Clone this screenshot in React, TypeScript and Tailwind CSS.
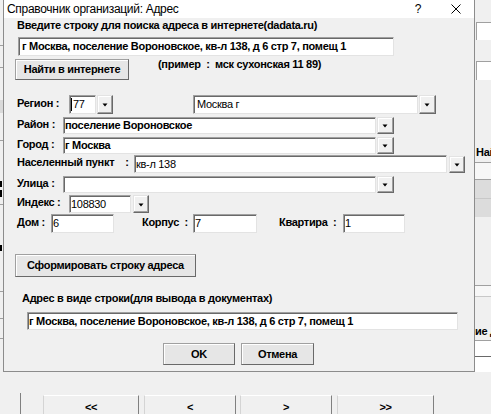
import React from 'react';

// sunken text box, classic WinForms look
const Field = ({ className = '', value = '', bold = false, cursor = false }: {
  className?: string;
  value?: string;
  bold?: boolean;
  cursor?: boolean;
}) => (
  <div
    className={`flex items-center shrink-0 bg-white border border-t-[#a0a0a0] border-l-[#a0a0a0] border-r-[#e3e3e3] border-b-[#e3e3e3] shadow-[inset_1px_1px_0_#696969] overflow-hidden whitespace-pre text-[11px] leading-[13px] ${bold ? 'font-bold' : 'font-normal'} ${className}`}
  >
    {cursor && <span className="w-px h-[13px] bg-black mr-px" />}
    {value}
  </div>
);

const DropBtn = ({ className = '' }: { className?: string }) => (
  <div
    className={`flex items-center justify-center shrink-0 bg-[#f0f0f0] border border-t-[#e3e3e3] border-l-[#e3e3e3] border-r-[#696969] border-b-[#696969] shadow-[inset_-1px_-1px_0_#a0a0a0,inset_1px_1px_0_#ffffff] ${className}`}
  >
    <svg width="7" height="4" viewBox="0 0 7 4" className="mt-px">
      <path d="M0.5 0.5h5l-2.5 3z" fill="#000" />
    </svg>
  </div>
);

const Btn = ({ className = '', children }: { className?: string; children: React.ReactNode }) => (
  <div
    className={`flex items-center justify-center shrink-0 bg-[#e6e6e6] border border-[#a0a0a0] border-r-[#696969] border-b-[#696969] shadow-[inset_1px_1px_0_#ffffff] text-[11px] font-bold leading-[13px] ${className}`}
  >
    {children}
  </div>
);

// row labels sit a touch above the middle of their text box
const Label = ({ className = '', children }: { className?: string; children: React.ReactNode }) => (
  <div className={`shrink-0 whitespace-pre text-[11px] leading-[13px] font-bold ${className}`}>{children}</div>
);

const NavBtn = ({ className = '', children }: { className?: string; children: React.ReactNode }) => (
  <div
    className={`flex justify-center pt-[5px] h-[26px] shrink-0 bg-[#f0f0f0] border border-t-[#ffffff] border-l-[#d4d4d4] border-r-[#808080] border-b-[#808080] text-[11px] font-bold leading-[13px] ${className}`}
  >
    {children}
  </div>
);

const Dialog = () => (
  <div className="absolute left-[3px] top-0 w-[472px] h-[372px] flex flex-col bg-[#f0f0f0] border-l border-r border-b border-[#8c8c8c]">
    <div className="h-[18px] shrink-0 flex items-center bg-white text-[12px] leading-[14px]">
      <span className="pl-[3px]">Справочник организаций: Адрес</span>
      <span className="ml-auto w-[40px] text-center">?</span>
      <span className="w-[36px] flex justify-center">
        <svg width="10" height="10" viewBox="0 0 10 10">
          <path d="M0.5 0.5l9 9M9.5 0.5l-9 9" stroke="#000" strokeWidth="1" />
        </svg>
      </span>
    </div>

    <div className="flex flex-col pl-[13px]">
      <Label className="mt-px">Введите строку для поиска адреса в интернете(dadata.ru)</Label>
      <Field
        className="mt-[5px] ml-px w-[376px] h-[19px] pl-[3px]"
        bold
        value="г Москва, поселение Вороновское, кв-л 138, д 6 стр 7, помещ 1"
      />
      <div className="mt-[3px] flex items-start">
        <Btn className="-ml-[2px] w-[114px] h-[21px]">Найти в интернете</Btn>
        <Label className="ml-[29px] -mt-px">{'(пример  :  мск сухонская 11 89)'}</Label>
      </div>

      <div className="mt-[15px] flex items-center h-[19px]">
        <Label className="w-[52px] mb-[3px]">Регион :</Label>
        <Field className="w-[27px] h-[19px] pl-px" cursor value="77" />
        <DropBtn className="ml-px w-[16px] h-[19px]" />
        <Field className="ml-[80px] w-[225px] h-[19px] pl-[3px]" value="Москва г" />
        <DropBtn className="ml-px w-[17px] h-[19px]" />
      </div>
      <div className="mt-[3px] flex items-center h-[17px]">
        <Label className="w-[46px] mb-[3px]">Район :</Label>
        <Field className="w-[313px] h-[17px] pl-px" bold value="поселение Вороновское" />
        <DropBtn className="ml-px w-[17px] h-[17px]" />
      </div>
      <div className="mt-[3px] flex items-center h-[17px]">
        <Label className="w-[46px] mb-[3px]">Город :</Label>
        <Field className="w-[313px] h-[17px] pl-px" bold value="г Москва" />
        <DropBtn className="ml-px w-[17px] h-[17px]" />
      </div>
      <div className="mt-px flex items-center h-[18px]">
        <Label className="w-[117px] mb-[3px]">{'Населенный пункт    :'}</Label>
        <Field className="w-[313px] h-[18px] pl-px" value="кв-л 138" />
        <DropBtn className="ml-[2px] w-[16px] h-[17px]" />
      </div>
      <div className="mt-[3px] flex items-center h-[17px]">
        <Label className="w-[46px] mb-[3px]">Улица :</Label>
        <Field className="w-[313px] h-[17px] pl-px" />
        <DropBtn className="ml-px w-[17px] h-[17px]" />
      </div>
      <div className="mt-[2px] flex items-center h-[18px]">
        <Label className="w-[52px] mb-[3px]">Индекс :</Label>
        <Field className="w-[62px] h-[18px] pl-px" value="108830" />
        <DropBtn className="ml-[2px] w-[16px] h-[18px]" />
      </div>
      <div className="mt-px flex items-center h-[19px]">
        <Label className="w-[34px] mb-[3px]">Дом :</Label>
        <Field className="w-[63px] h-[19px] pl-px" value="6" />
        <Label className="ml-[28px] w-[51px] mb-[3px]">{'Корпус  :'}</Label>
        <Field className="w-[64px] h-[19px] pl-px" value="7" />
        <Label className="ml-[22px] w-[64px] mb-[3px]">{'Квартира  :'}</Label>
        <Field className="w-[62px] h-[19px] pl-px" value="1" />
      </div>

      <Btn className="mt-[21px] -ml-[2px] w-[181px] h-[23px]">Сформировать строку адреса</Btn>
      <Label className="mt-[15px] ml-[5px]">Адрес в виде строки(для вывода в документах)</Label>
      <Field
        className="mt-[7px] ml-[10px] w-[431px] h-[18px] pl-px"
        bold
        value="г Москва, поселение Вороновское, кв-л 138, д 6 стр 7, помещ 1"
      />
      <div className="mt-[13px] flex">
        <Btn className="ml-[146px] w-[72px] h-[22px]">OK</Btn>
        <Btn className="ml-[6px] w-[73px] h-[22px]">Отмена</Btn>
      </div>
    </div>
  </div>
);

// bits of the owner window that peek out around the dialog
const LeftStrip = () => (
  <div className="w-[3px] flex flex-col shrink-0">
    <div className="h-[45px]" />
    <div className="h-px bg-[#a0a0a0]" />
    <div className="h-[21px]" />
    <div className="h-px bg-[#a0a0a0]" />
    <div className="h-[32px]" />
    <div className="h-[13px] bg-[#d9d9d9]" />
    <div className="h-[27px]" />
    <div className="h-px bg-[#a0a0a0]" />
    <div className="h-[40px]" />
    <div className="h-[6px] w-[2px] bg-black" />
    <div className="h-[3px]" />
    <div className="h-[7px] w-[2px] bg-black" />
    <div className="h-[7px]" />
    <div className="h-px bg-[#a0a0a0]" />
    <div className="h-[40px]" />
    <div className="h-[6px] w-[2px] bg-black" />
    <div className="h-[40px]" />
    <div className="h-px bg-[#a0a0a0]" />
    <div className="h-[26px]" />
    <div className="h-px bg-[#a0a0a0]" />
    <div className="h-[19px]" />
    <div className="h-px bg-[#a0a0a0]" />
  </div>
);

const RightStrip = () => (
  <div className="flex-1 flex flex-col text-[11px] font-bold leading-[13px] overflow-hidden">
    <div className="h-[22px]" />
    <div className="h-[18px] ml-[2px] bg-white border-l border-t border-[#a0a0a0]" />
    <div className="h-[21px]" />
    <div className="h-[19px] ml-[2px] bg-white border-l border-t border-[#a0a0a0]" />
    <div className="h-[66px]" />
    <div className="h-[13px] pl-[2px] whitespace-nowrap">Най</div>
    <div className="h-[3px]" />
    <div className="h-px bg-[#a0a0a0]" />
    <div className="h-[16px] bg-[#f7f7f7]" />
    <div className="h-px bg-[#a0a0a0]" />
    <div className="h-[18px] bg-[#dcdcdc]" />
    <div className="h-px bg-[#c8c8c8]" />
    <div className="h-[18px] bg-[#dcdcdc]" />
    <div className="h-[68px]" />
    <div className="h-px bg-[#a0a0a0]" />
    <div className="h-[10px] bg-[#f7f7f7]" />
    <div className="h-px bg-[#c8c8c8]" />
    <div className="h-[28px]" />
    <div className="h-[13px] pl-px whitespace-nowrap">ие д</div>
    <div className="h-[2px]" />
    <div className="h-px bg-[#a0a0a0]" />
    <div className="h-[15px] bg-white" />
    <div className="h-px bg-[#696969]" />
    <div className="flex-1 bg-white" />
  </div>
);

const App = () => (
  <div className="relative w-[491px] h-[414px] overflow-hidden bg-[#f0f0f0] text-black tracking-[-0.3px] font-['Liberation_Sans',Arial,sans-serif]">
    <div className="flex flex-col h-full">
      <div className="flex h-[372px] shrink-0">
        <LeftStrip />
        <div className="w-[471px] shrink-0" />
        <RightStrip />
      </div>
      <div className="mt-[21px] flex items-start">
        <div className="w-[21px] h-[30px] shrink-0 border-r border-[#808080]" />
        <NavBtn className="mt-[2px] ml-[22px] w-[96px]">{'<<'}</NavBtn>
        <NavBtn className="mt-[2px] ml-[5px] w-[92px]">{'<'}</NavBtn>
        <NavBtn className="mt-[2px] ml-[4px] w-[92px]">{'>'}</NavBtn>
        <NavBtn className="mt-[2px] ml-[5px] w-[97px]">{'>>'}</NavBtn>
      </div>
    </div>
    <Dialog />
  </div>
);

export default App;
